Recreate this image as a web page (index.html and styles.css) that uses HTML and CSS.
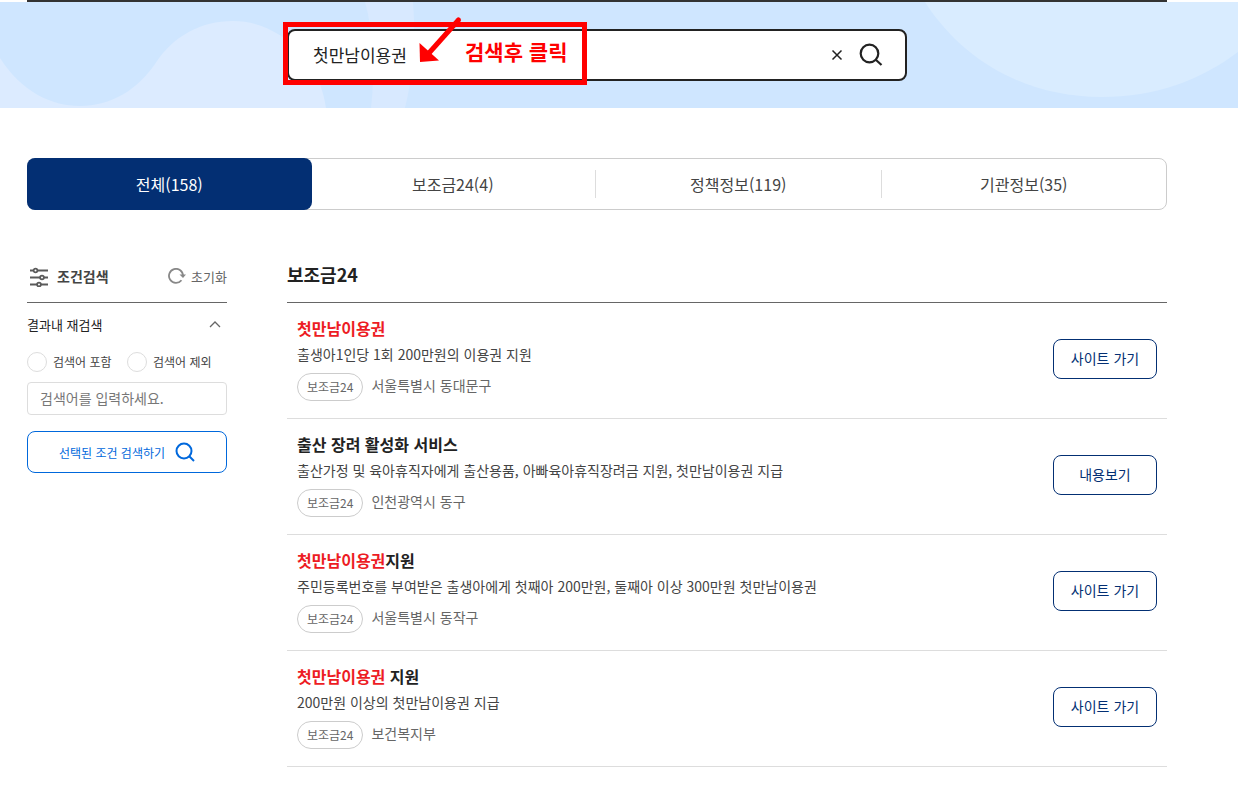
FILE: index.html
```html
<!DOCTYPE html>
<html lang="ko">
<head>
  <meta charset="UTF-8">
  <meta name="viewport" content="width=device-width, initial-scale=1.0">
  <title>통합검색</title>
  <link rel="stylesheet" href="styles.css">
</head>
<body>
  <!-- Search banner -->
  <div class="top-line"></div>
  <header class="banner">
    <svg class="banner-bg" viewBox="0 0 1238 106" preserveAspectRatio="xMidYMid slice" aria-hidden="true">
      <path fill="#dcebff" d="M0 56C21 89 51 104 80 104C111 104 137 88 155 62C173 34 201 19 233 19C279 19 320 58 326 106H0Z"/>
      <path fill="#d8e9ff" d="M365 0C374 32 375 72 371 106H405C413 75 416 38 413 0Z"/>
      <path fill="#d9ecff" d="M925 0C964 61 1029 95 1101 95C1156 95 1201 78 1238 50V0Z"/>
    </svg>
    <form class="search-box">
      <input class="search-input" type="text" value="첫만남이용권" aria-label="검색어">
      <button class="icon-btn clear-btn" type="button" aria-label="지우기">
        <svg width="12" height="12" viewBox="0 0 12 12"><path d="M1.5 1.5l9 9M10.5 1.5l-9 9" fill="none" stroke="#222" stroke-width="1.5"/></svg>
      </button>
      <button class="icon-btn" type="button" aria-label="검색">
        <svg width="24" height="24" viewBox="0 0 24 24"><g fill="none" stroke="#222" stroke-width="2.2"><circle cx="10.5" cy="10.5" r="8.8"/><path d="M16.5 16.5l6 5.5"/></g></svg>
      </button>
      <div class="guide">
        <svg class="guide-arrow" width="44" height="48" viewBox="0 0 44 48" aria-hidden="true">
          <path d="M39.5 4L10 37" stroke="#f00" stroke-width="5" stroke-linecap="round"/>
          <path d="M0.5 27L20 44.500L1 46Z" fill="#f00"/>
        </svg>
        <strong class="guide-text">검색후 클릭</strong>
      </div>
    </form>
  </header>

  <div class="container">
    <!-- Result tabs -->
    <nav class="tabs">
      <a href="#" class="tab active">전체(158)</a>
      <a href="#" class="tab">보조금24(4)</a>
      <a href="#" class="tab">정책정보(119)</a>
      <a href="#" class="tab">기관정보(35)</a>
    </nav>

    <div class="content">
      <!-- Filter -->
      <aside class="filter">
        <div class="filter-head">
          <svg width="20" height="20" viewBox="0 0 20 20" aria-hidden="true">
            <g fill="#fff" stroke="#5a5a5a" stroke-width="1.8"><path d="M1 3.500h18M1 10.500h18M1 17.500h18"/><circle cx="6.5" cy="3.500" r="1.9"/><circle cx="13" cy="10.500" r="1.9"/><circle cx="10" cy="17.500" r="1.9"/></g>
          </svg>
          <h2>조건검색</h2>
          <button class="reset-btn" type="button">
            <svg width="18" height="16" viewBox="0 0 18 16" aria-hidden="true"><path d="M13.500 12.200A7 7 0 1 1 15 8" fill="none" stroke="#888" stroke-width="1.8"/><path d="M11.500 6.500h6.500L15 10Z" fill="#888"/></svg>
            초기화
          </button>
        </div>
        <button class="filter-toggle" type="button">
          결과내 재검색
          <svg width="12" height="8" viewBox="0 0 12 8" aria-hidden="true"><path d="M1 7l5-5 5 5" fill="none" stroke="#666" stroke-width="1.3"/></svg>
        </button>
        <div class="radios">
          <label><input type="radio" name="scope">검색어 포함</label>
          <label><input type="radio" name="scope">검색어 제외</label>
        </div>
        <input class="filter-input" type="text" placeholder="검색어를 입력하세요." aria-label="결과내 검색어">
        <button class="filter-btn" type="button">
          선택된 조건 검색하기
          <svg width="20" height="20" viewBox="0 0 20 20" aria-hidden="true"><g fill="none" stroke="#0068dc" stroke-width="2"><circle cx="9" cy="9" r="7.5"/><path d="M14 14l5 5"/></g></svg>
        </button>
      </aside>

      <!-- Results -->
      <main class="results">
        <h2 class="results-title">보조금24</h2>
        <ul class="result-list">
          <li class="result">
            <div>
              <h3><em>첫만남이용권</em></h3>
              <p class="desc">출생아1인당 1회 200만원의 이용권 지원</p>
              <div class="meta"><span class="tag">보조금24</span><span>서울특별시 동대문구</span></div>
            </div>
            <button class="go-btn" type="button">사이트 가기</button>
          </li>
          <li class="result">
            <div>
              <h3>출산 장려 활성화 서비스</h3>
              <p class="desc">출산가정 및 육아휴직자에게 출산용품, 아빠육아휴직장려금 지원, 첫만남이용권 지급</p>
              <div class="meta"><span class="tag">보조금24</span><span>인천광역시 동구</span></div>
            </div>
            <button class="go-btn" type="button">내용보기</button>
          </li>
          <li class="result">
            <div>
              <h3><em>첫만남이용권</em>지원</h3>
              <p class="desc">주민등록번호를 부여받은 출생아에게 첫째아 200만원, 둘째아 이상 300만원 첫만남이용권</p>
              <div class="meta"><span class="tag">보조금24</span><span>서울특별시 동작구</span></div>
            </div>
            <button class="go-btn" type="button">사이트 가기</button>
          </li>
          <li class="result">
            <div>
              <h3><em>첫만남이용권</em> 지원</h3>
              <p class="desc">200만원 이상의 첫만남이용권 지급</p>
              <div class="meta"><span class="tag">보조금24</span><span>보건복지부</span></div>
            </div>
            <button class="go-btn" type="button">사이트 가기</button>
          </li>
        </ul>
      </main>
    </div>
  </div>
</body>
</html>
```
FILE: styles.css
```css
* {
  box-sizing: border-box;
}

body {
  margin: 0;
  font-family: "Noto Sans CJK KR", sans-serif;
  font-size: 14px;
  line-height: 20px;
  color: #444;
  background-color: #fff;
}

h2, h3, p, ul {
  margin: 0;
  padding: 0;
}

button, input {
  font-family: inherit;
  color: inherit;
}

button {
  padding: 0;
  border: none;
  background: none;
  cursor: pointer;
}

/* Search banner */
.top-line {
  height: 2px;
  margin: 0 71px 0 27px;
  background-color: #333;
}

.banner {
  position: relative;
  height: 106px;
  padding: 27px 71px 0 27px;
  background-color: #cfe6ff;
}

.banner-bg {
  position: absolute;
  top: 0;
  left: 0;
  width: 100%;
  height: 100%;
}

.search-box {
  position: relative;
  display: flex;
  align-items: center;
  max-width: 620px;
  height: 52px;
  margin: 0 auto;
  padding: 0 22px 0 24px;
  border: 2px solid #222;
  border-radius: 8px;
  background-color: #fff;
}

.search-input {
  flex: 1;
  min-width: 0;
  padding: 0 0 2px;
  border: none;
  outline: none;
  background: none;
  font-size: 17px;
  color: #222;
}

.icon-btn {
  display: flex;
}

.clear-btn {
  margin-right: 16px;
}

/* Red guide over the search box */
.guide {
  position: absolute;
  top: -9px;
  left: -6px;
  width: 304px;
  height: 63px;
  border: 5px solid #f00;
  pointer-events: none;
}

.guide-arrow {
  position: absolute;
  top: -11px;
  left: 131px;
}

.guide-text {
  position: absolute;
  top: 9px;
  left: 177px;
  font-size: 21px;
  line-height: 30px;
  color: #f00;
  white-space: nowrap;
}

.container {
  padding: 50px 71px 40px 27px;
}

/* Result tabs */
.tabs {
  display: flex;
  height: 52px;
  border: 1px solid #ccc;
  border-radius: 8px;
}

.tab {
  flex: 1;
  display: flex;
  align-items: center;
  justify-content: center;
  font-size: 16px;
  color: #444;
  text-decoration: none;
}

.tab.active {
  margin: -1px -1px -1px -1px;
  border-radius: 8px;
  background-color: #032f73;
  color: #fff;
}

.tab + .tab + .tab {
  height: 28px;
  align-self: center;
  border-left: 1px solid #ddd;
}

.content {
  display: flex;
  gap: 60px;
  padding-top: 50px;
}

/* Filter */
.filter {
  flex: none;
  width: 200px;
}

.filter-head {
  display: flex;
  align-items: center;
  height: 43px;
  padding: 0 0 8px 2px;
  border-bottom: 1px solid #666;
}

.filter-head h2 {
  margin-left: 8px;
  padding-bottom: 2px;
  font-size: 14px;
}

.reset-btn {
  display: flex;
  align-items: center;
  gap: 5px;
  margin-left: auto;
  padding-bottom: 2px;
  font-size: 13px;
  color: #666;
}

.filter-toggle {
  display: flex;
  align-items: center;
  justify-content: space-between;
  width: 100%;
  height: 42px;
  padding-right: 6px;
  font-size: 13px;
  color: #222;
}

.radios {
  display: flex;
  margin: 7px 0 10px;
}

.radios label {
  display: flex;
  align-items: center;
  gap: 6px;
  width: 100px;
  font-size: 12px;
}

.radios input {
  appearance: none;
  width: 20px;
  height: 20px;
  margin: 0;
  border: 1px solid #ddd;
  border-radius: 50%;
}

.radios input:checked {
  border: 6px solid #0068dc;
}

.filter-input {
  display: block;
  width: 100%;
  height: 33px;
  padding: 0 12px 2px;
  border: 1px solid #ddd;
  border-radius: 4px;
  font-size: 14px;
}

.filter-input::placeholder {
  color: #777;
}

.filter-btn {
  display: flex;
  align-items: center;
  justify-content: center;
  gap: 10px;
  width: 100%;
  height: 42px;
  margin-top: 16px;
  border: 1px solid #0068dc;
  border-radius: 8px;
  font-size: 12px;
  color: #0068dc;
}

/* Results */
.results {
  flex: 1;
  min-width: 0;
}

.results-title {
  height: 43px;
  border-bottom: 1px solid #666;
  font-size: 18px;
  line-height: 28px;
  color: #222;
}

.result-list {
  list-style: none;
}

.result {
  display: flex;
  align-items: center;
  justify-content: space-between;
  padding: 14px 10px 17px;
  border-bottom: 1px solid #ddd;
}

.result h3 {
  font-size: 16px;
  line-height: 22px;
  color: #222;
}

.result em {
  font-style: normal;
  color: #ed1c24;
}

.desc {
  margin: 5px 0 9px;
}

.meta {
  display: flex;
  align-items: flex-start;
  gap: 8px;
  color: #666;
}

.tag {
  padding: 3px 9px;
  border: 1px solid #ccc;
  border-radius: 14px;
  font-size: 12px;
}

.meta span + span {
  padding-top: 2px;
}

.go-btn {
  flex: none;
  width: 104px;
  height: 40px;
  padding-bottom: 2px;
  border: 1px solid #032f73;
  border-radius: 8px;
  font-size: 14px;
  color: #032f73;
}
```
